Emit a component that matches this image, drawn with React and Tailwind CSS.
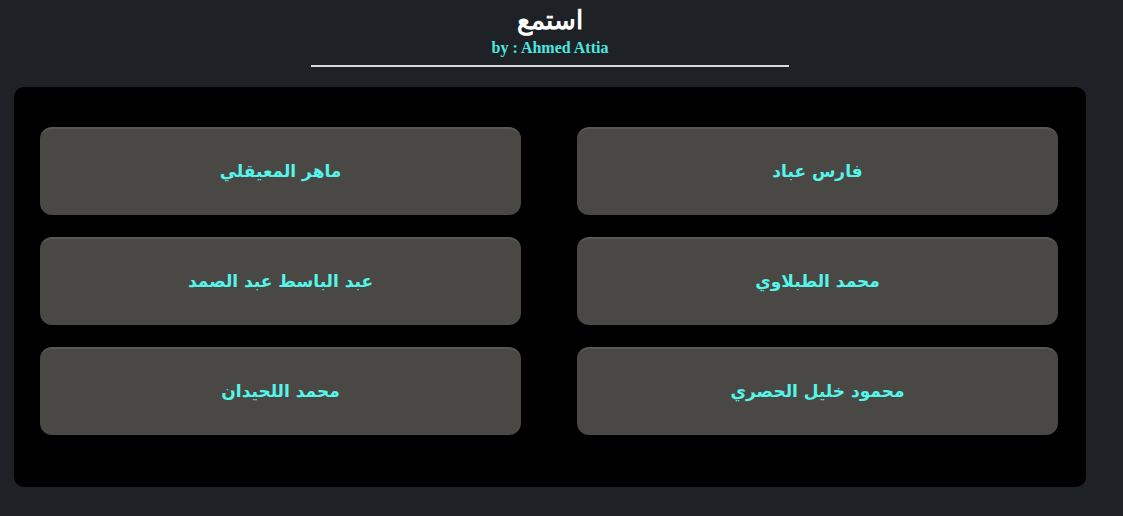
const reciters = [
  "فارس عباد",
  "ماهر المعيقلي",
  "محمد الطبلاوي",
  "عبد الباسط عبد الصمد",
  "محمود خليل الحصري",
  "محمد اللحيدان",
];

function ReciterCard({ name }) {
  return (
    <button className="h-[88px] w-full rounded-[12px] bg-[#4a4844] border-t-2 border-[#5a5853] flex items-center justify-center text-[17px] font-bold text-[#55f5ea] font-['DejaVu_Sans',sans-serif]">
      {name}
    </button>
  );
}

export default function App() {
  return (
    <div className="min-h-[516px] w-full bg-[#1e2125]">
      <div className="w-[1100px]">
        <header className="flex flex-col items-center pt-[5px]">
          <h1 dir="rtl" className="text-[26px] leading-[32px] font-bold text-white font-['Liberation_Serif','DejaVu_Serif',serif]">
            استمع
          </h1>
          <p className="mt-[2px] text-[16px] leading-[18px] font-bold text-[#4be6e0] font-['Liberation_Serif',serif]">
            by : Ahmed Attia
          </p>
          <div className="mt-[8px] h-[2px] w-[478px] bg-[#d9d9d9]" />
        </header>
        <main className="ml-[14px] mt-[20px] w-[1072px] h-[400px] rounded-[10px] bg-black pt-[40px] pl-[26px] pr-[28px]">
          <div dir="rtl" className="grid grid-cols-2 gap-x-[56px] gap-y-[22px]">
            {reciters.map((name) => (
              <ReciterCard key={name} name={name} />
            ))}
          </div>
        </main>
      </div>
    </div>
  );
}
